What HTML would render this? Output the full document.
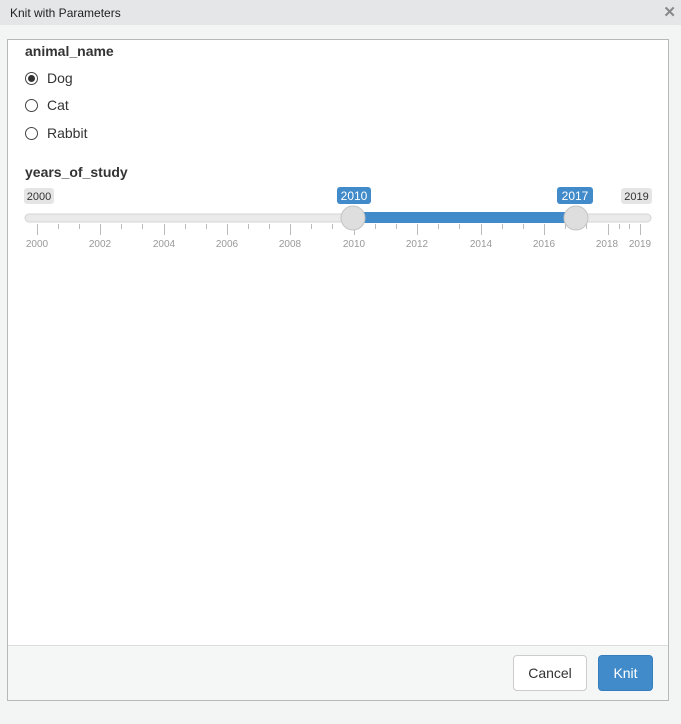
<!DOCTYPE html>
<html><head><meta charset="utf-8"><style>
*{margin:0;padding:0;box-sizing:border-box}
body{width:681px;height:724px;background:#f3f4f4;font-family:"Liberation Sans",sans-serif;position:relative;overflow:hidden}
.title{position:absolute;left:0;top:0;width:681px;height:25px;background:#e4e6e8;font-size:12px;color:#222;padding:6px 0 0 10px}
.x{position:absolute;right:5px;top:3px;font-size:15px;color:#888;font-weight:bold}
.panel{position:absolute;left:7px;top:39px;width:662px;height:662px;background:#fff;border:1px solid #b8b8b8}
.footer{position:absolute;left:0;top:605px;width:660px;height:55px;background:#f5f6f6;border-top:1px solid #ddd}
.h{position:absolute;left:17px;font-size:14px;font-weight:bold;color:#333}
.r{position:absolute;left:17px;font-size:14px;color:#333}
.r i{display:inline-block;width:13px;height:13px;border:1px solid #444;border-radius:50%;vertical-align:-2px;margin-right:9px;position:relative}
.r i.on:after{content:"";position:absolute;left:2px;top:2px;width:7px;height:7px;border-radius:50%;background:#333}
.btn{position:absolute;top:615px;height:36px;border-radius:4px;font-size:14px;text-align:center;line-height:34px}
</style></head><body>
<div class="title">Knit with Parameters<span class="x">✕</span></div>
<div class="panel">
<div class="h" style="top:3px">animal_name</div>
<div class="r" style="top:30px"><i class="on"></i>Dog</div>
<div class="r" style="top:57px"><i></i>Cat</div>
<div class="r" style="top:85px"><i></i>Rabbit</div>
<div class="h" style="top:124px">years_of_study</div>
<svg style="position:absolute;left:-8px;top:-40px" width="681" height="300">
<g font-family="Liberation Sans" font-size="11">
<rect x="24" y="188" width="30" height="16" rx="3" fill="#e5e5e5"/><text x="39" y="200" text-anchor="middle" fill="#333">2000</text>
<rect x="621" y="188" width="31" height="16" rx="3" fill="#e5e5e5"/><text x="636.5" y="200" text-anchor="middle" fill="#333">2019</text>
<rect x="337" y="187" width="34" height="17" rx="3" fill="#428bca"/><text x="354" y="200" text-anchor="middle" fill="#fff" font-size="12">2010</text>
<rect x="557" y="187" width="36" height="17" rx="3" fill="#428bca"/><text x="575" y="200" text-anchor="middle" fill="#fff" font-size="12">2017</text>
</g>
<rect x="25" y="214" width="626" height="8" rx="4" fill="#eaeaea" stroke="#d4d4d4"/>
<rect x="353" y="212" width="223" height="11" fill="#428bca"/>
<g stroke="#bbb" stroke-width="1">
<path d="M37.5 224v11M100.5 224v11M164.5 224v11M227.5 224v11M290.5 224v11M354.5 224v11M417.5 224v11M481.5 224v11M544.5 224v11M608.5 224v11M640.5 224v11"/>
<path d="M58.5 224v5M79.5 224v5M121.5 224v5M142.5 224v5M185.5 224v5M206.5 224v5M248.5 224v5M269.5 224v5M311.5 224v5M332.5 224v5M375.5 224v5M396.5 224v5M438.5 224v5M459.5 224v5M502.5 224v5M523.5 224v5M565.5 224v5M586.5 224v5M619.5 224v5M629.5 224v5"/>
</g>
<g font-family="Liberation Sans" font-size="10" fill="#999" text-anchor="middle">
<text x="37" y="247">2000</text><text x="100" y="247">2002</text><text x="164" y="247">2004</text><text x="227" y="247">2006</text><text x="290" y="247">2008</text><text x="354" y="247">2010</text><text x="417" y="247">2012</text><text x="481" y="247">2014</text><text x="544" y="247">2016</text><text x="607" y="247">2018</text><text x="640" y="247">2019</text>
</g>
<circle cx="353" cy="218" r="12" fill="#dedede" stroke="#c4c4c4"/>
<circle cx="576" cy="218" r="12" fill="#dedede" stroke="#c4c4c4"/>
</svg>
<div class="footer"></div>
<div class="btn" style="left:505px;width:74px;background:#fff;border:1px solid #ccc;color:#333">Cancel</div>
<div class="btn" style="left:590px;width:55px;background:#428bca;border:1px solid #357ebd;color:#fff">Knit</div>
</div>
</body></html>
